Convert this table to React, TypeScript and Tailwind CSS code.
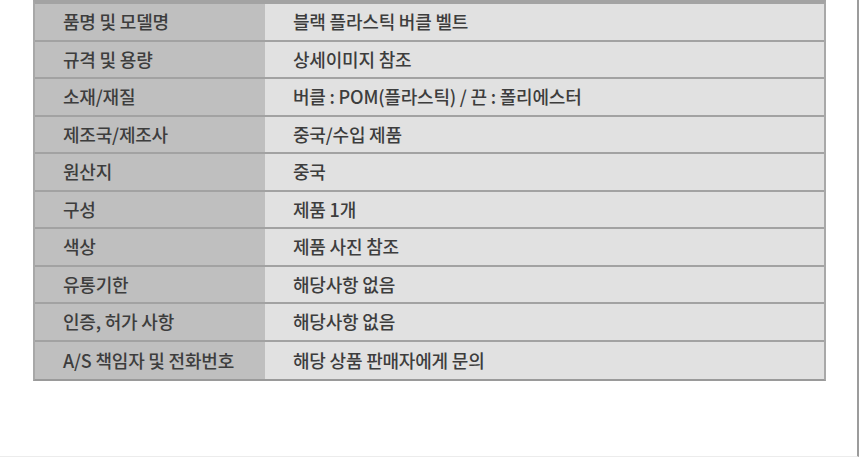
import React from 'react';

const rows: [string, string][] = [
  ['품명 및 모델명', '블랙 플라스틱 버클 벨트'],
  ['규격 및 용량', '상세이미지 참조'],
  ['소재/재질', '버클 : POM(플라스틱) / 끈 : 폴리에스터'],
  ['제조국/제조사', '중국/수입 제품'],
  ['원산지', '중국'],
  ['구성', '제품 1개'],
  ['색상', '제품 사진 참조'],
  ['유통기한', '해당사항 없음'],
  ['인증, 허가 사항', '해당사항 없음'],
  ['A/S 책임자 및 전화번호', '해당 상품 판매자에게 문의'],
];

export default function App() {
  return (
    <div
      className="w-[860px] h-[460px] bg-white overflow-hidden text-[#3d3d3d]"
      style={{ fontFamily: '"Noto Sans CJK KR", "Noto Sans", sans-serif' }}
    >
      <div className="w-[859px] h-[457px] border-r-2 border-[#9c9c9c] border-b border-b-[#ececec] pl-[33px]">
        {/* product info table */}
        <div className="w-[793px] border-t-4 border-t-[#a3a3a3] border-x-2 border-x-[#a8a8a8] border-b-2 border-b-[#9a9a9a]">
          {rows.map(([label, value], i) => (
            <div
              key={label}
              className={
                'flex h-[37.5px] text-[18px] font-medium tracking-[-0.2px] ' +
                (i < rows.length - 1 ? 'border-b-2 border-[#a2a2a2]' : '')
              }
            >
              <div className="w-[230px] bg-[#bfbfbf] flex items-center pl-[28px]">{label}</div>
              <div className="flex-1 bg-[#e1e1e1] flex items-center pl-[28px]">{value}</div>
            </div>
          ))}
        </div>
      </div>
    </div>
  );
}
